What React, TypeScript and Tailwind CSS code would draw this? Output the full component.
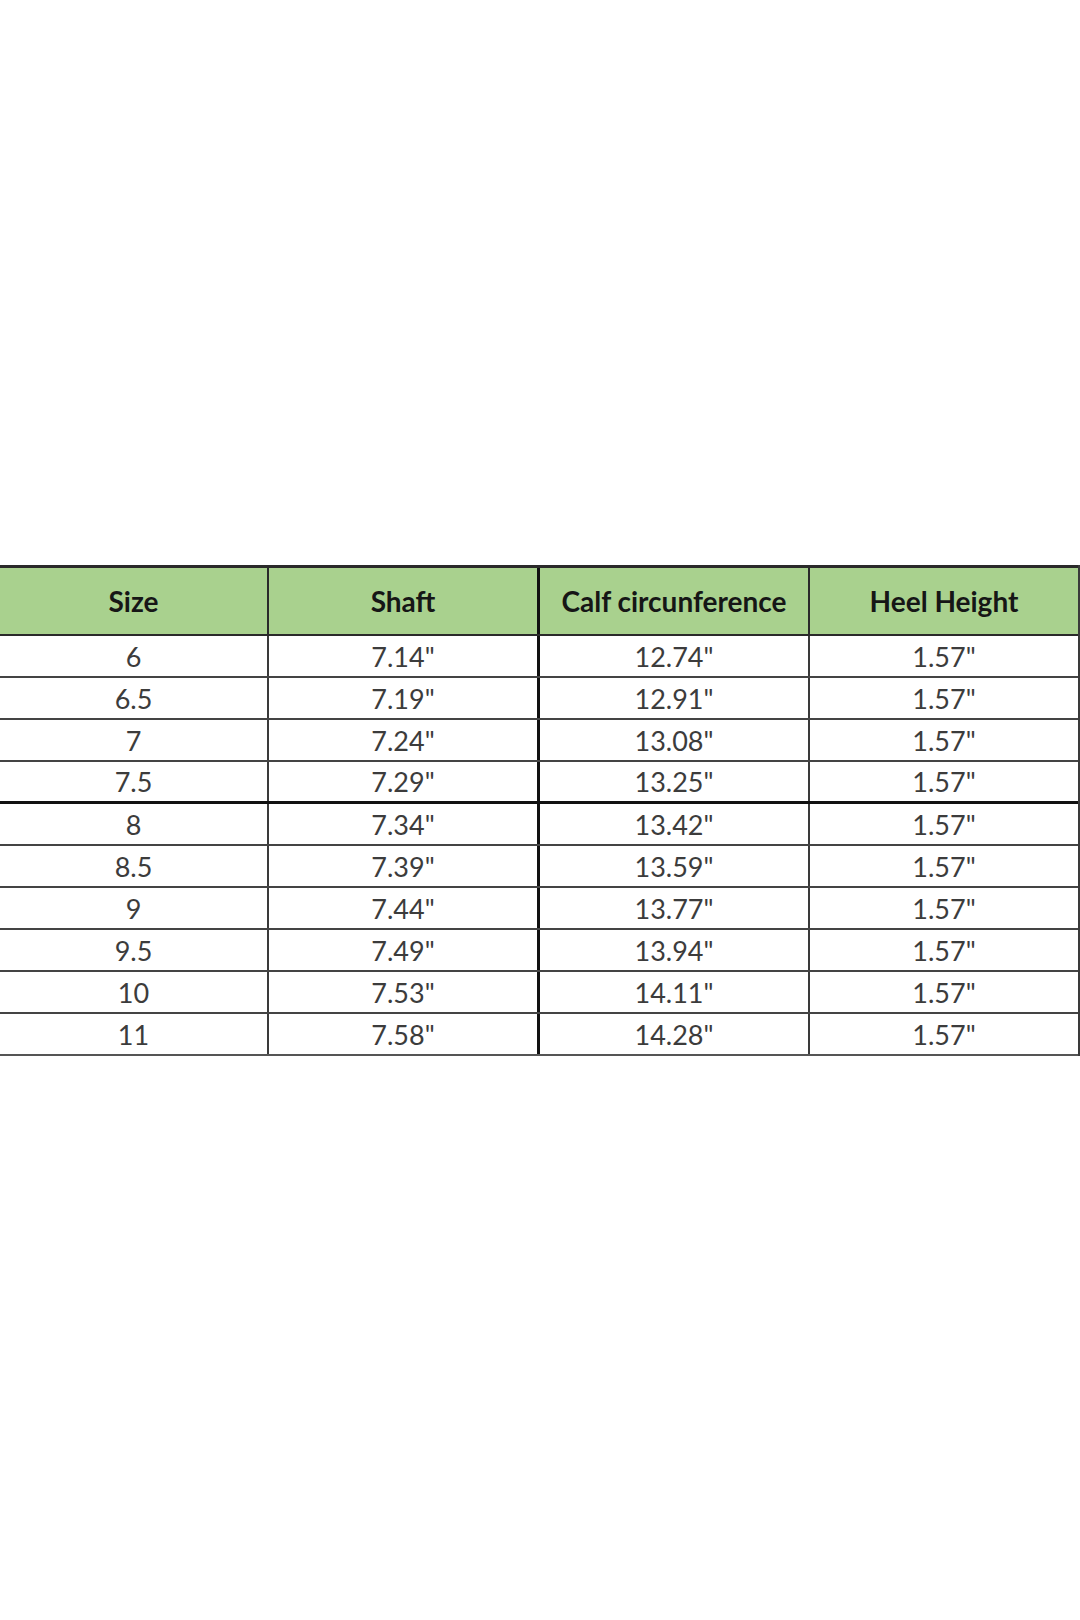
import React from "react";

const rows: [string, string, string, string][] = [
  ["6", '7.14"', '12.74"', '1.57"'],
  ["6.5", '7.19"', '12.91"', '1.57"'],
  ["7", '7.24"', '13.08"', '1.57"'],
  ["7.5", '7.29"', '13.25"', '1.57"'],
  ["8", '7.34"', '13.42"', '1.57"'],
  ["8.5", '7.39"', '13.59"', '1.57"'],
  ["9", '7.44"', '13.77"', '1.57"'],
  ["9.5", '7.49"', '13.94"', '1.57"'],
  ["10", '7.53"', '14.11"', '1.57"'],
  ["11", '7.58"', '14.28"', '1.57"'],
];

const headers = ["Size", "Shaft", "Calf circunference", "Heel Height"];

export default function App() {
  return (
    <div
      className="w-[1080px] h-[1620px] bg-white pt-[565px]"
      style={{ fontFamily: "Lato, 'Open Sans', sans-serif" }}
    >
      <div className="w-[1080px] border-r-2 border-[#3a3a3a]">
        <div className="grid grid-cols-[269px_271px_270px_268px] h-[71px] border-t-[3px] border-b-2 border-[#2a2a2a] bg-[#a9d18e]">
          {headers.map((h, i) => (
            <div
              key={h}
              className={
                "flex items-center justify-center text-[28px] font-bold text-[#161616] " +
                (i === 0 ? "border-r-2 border-[#2a2a2a]" : i === 1 ? "border-r-[3px] border-[#111]" : i === 2 ? "border-r-2 border-[#2a2a2a]" : "")
              }
            >
              {h}
            </div>
          ))}
        </div>
        {rows.map((r, ri) => (
          <div
            key={ri}
            className={
              "grid grid-cols-[269px_271px_270px_268px] h-[42px] " +
              (ri === 3 ? "border-b-[3px] border-[#111]" : ri === 9 ? "border-b-2 border-[#555]" : "border-b-2 border-[#444]")
            }
          >
            {r.map((c, ci) => (
              <div
                key={ci}
                className={
                  "flex items-center justify-center text-[27px] leading-none text-[#3c3c3c] " +
                  (ci === 0 ? "border-r-2 border-[#3a3a3a]" : ci === 1 ? "border-r-[3px] border-[#111]" : ci === 2 ? "border-r-2 border-[#3a3a3a]" : "")
                }
              >
                {c}
              </div>
            ))}
          </div>
        ))}
      </div>
    </div>
  );
}
